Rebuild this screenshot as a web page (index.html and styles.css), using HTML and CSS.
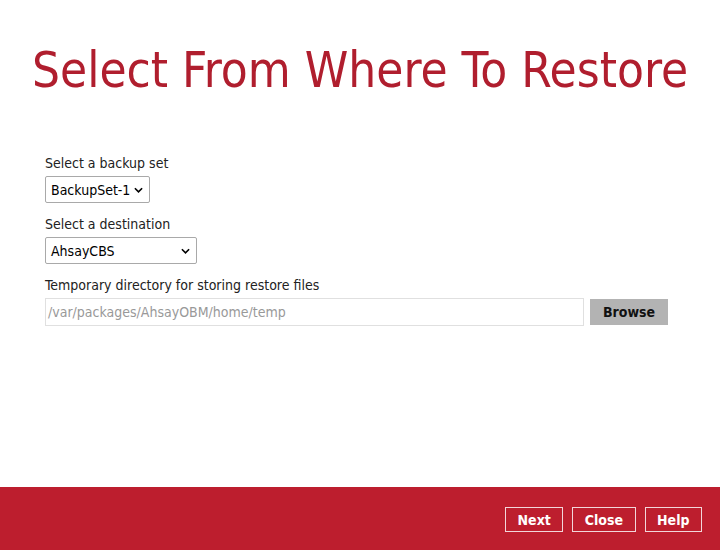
FILE: index.html
```html
<!DOCTYPE html>
<html>
<head>
<meta charset="utf-8">
<link rel="stylesheet" href="styles.css">
</head>
<body>
<div class="page">
  <main class="content">
    <h1 class="title">Select From Where To Restore</h1>
    <div class="form">
      <label class="label">Select a backup set</label>
      <div class="select sel-1"><span>BackupSet-1</span><svg class="chev" viewBox="0 0 10 6" width="9" height="6"><path d="M1 1 L5 5 L9 1" fill="none" stroke="#000" stroke-width="1.8"/></svg></div>
      <label class="label">Select a destination</label>
      <div class="select sel-2"><span>AhsayCBS</span><svg class="chev" viewBox="0 0 10 6" width="9" height="6"><path d="M1 1 L5 5 L9 1" fill="none" stroke="#000" stroke-width="1.8"/></svg></div>
      <label class="label">Temporary directory for storing restore files</label>
      <div class="dir-row">
        <div class="input">/var/packages/AhsayOBM/home/temp</div>
        <button class="browse">Browse</button>
      </div>
    </div>
  </main>
  <footer class="footer">
    <button class="fbtn">Next</button>
    <button class="fbtn">Close</button>
    <button class="fbtn">Help</button>
  </footer>
</div>
</body>
</html>
```
FILE: styles.css
```css
html, body { margin: 0; padding: 0; }
body { width: 720px; height: 550px; background: #fff; font-family: "DejaVu Sans Condensed", "DejaVu Sans", sans-serif; overflow: hidden; }
.page { display: flex; flex-direction: column; height: 550px; }
.content { flex: 1; }
.title { margin: 44px 0 0 32px; font-family: "DejaVu Sans Condensed", "DejaVu Sans", sans-serif; font-weight: normal; font-size: 49px; line-height: 54px; color: #b01e2e; white-space: nowrap; }
.form { margin: 57px 0 0 45px; display: flex; flex-direction: column; align-items: flex-start; }
.label { font-size: 14px; line-height: 17px; color: #222; margin-bottom: 4px; }
.select { box-sizing: border-box; height: 27px; border: 1px solid #a9a9a9; border-radius: 2px; display: flex; align-items: center; justify-content: space-between; padding: 0 6px 0 5px; font-size: 14px; color: #000; margin-bottom: 13px; }
.sel-1 { width: 105px; }
.sel-2 { width: 152px; }
.dir-row { display: flex; align-items: center; gap: 6px; }
.input { box-sizing: border-box; width: 539px; height: 28px; border: 1px solid #e0e0e0; font-size: 14px; color: #999; display: flex; align-items: center; padding-left: 2px; }
.browse { box-sizing: border-box; width: 78px; height: 26px; background: #b3b3b3; border: none; font-family: "DejaVu Sans Condensed", "DejaVu Sans", sans-serif; font-weight: bold; font-size: 14px; color: #111; padding: 0; }
.footer { height: 63px; background: #bd1e2e; display: flex; justify-content: flex-end; align-items: center; gap: 9px; padding-right: 18px; padding-top: 2px; box-sizing: border-box; }
.fbtn { box-sizing: border-box; height: 25px; padding: 0 11.5px; background: transparent; border: 1px solid #f2d6da; color: #fff; font-family: "DejaVu Sans Condensed", "DejaVu Sans", sans-serif; font-weight: bold; font-size: 14px; }
```
